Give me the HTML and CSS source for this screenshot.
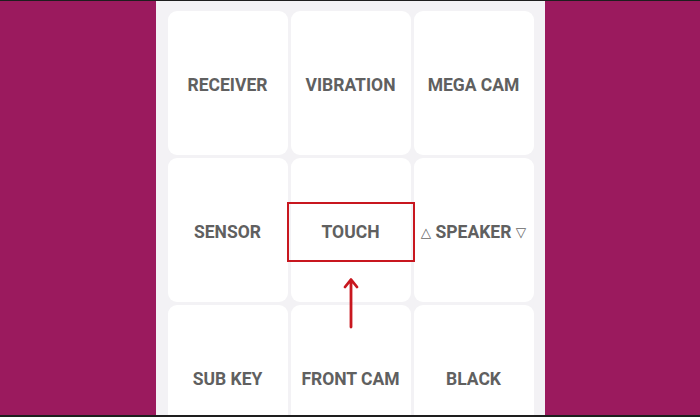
FILE: index.html
```html
<!DOCTYPE html>
<html>
<head>
<meta charset="utf-8">
<link rel="stylesheet" href="styles.css">
</head>
<body>
<div class="frame">
  <div class="panel">
    <div class="grid">
      <div class="cell">RECEIVER</div>
      <div class="cell">VIBRATION</div>
      <div class="cell">MEGA CAM</div>
      <div class="cell">SENSOR</div>
      <div class="cell cell-marked">TOUCH
        <span class="mark"></span>
        <svg class="arrow" width="20" height="54" viewBox="0 0 20 54">
          <path d="M10 50 L10 3 M4 10 L10 2.5 L16 10" fill="none" stroke="#c8171f" stroke-width="2.8" stroke-linecap="round" stroke-linejoin="round"/>
        </svg>
      </div>
      <div class="cell"><span class="tri">△</span>&nbsp;SPEAKER&nbsp;<span class="tri">▽</span></div>
      <div class="cell">SUB KEY</div>
      <div class="cell">FRONT CAM</div>
      <div class="cell">BLACK</div>
    </div>
  </div>
</div>
</body>
</html>
```
FILE: styles.css
```css
html, body {
  margin: 0;
  padding: 0;
}
body {
  width: 700px;
  height: 417px;
  overflow: hidden;
  background: #9b1a5e;
}
.frame {
  box-sizing: border-box;
  width: 700px;
  height: 417px;
  border-top: 1px solid #1e1e1e;
  border-bottom: 2px solid #1e1e1e;
  display: flex;
  justify-content: center;
  overflow: hidden;
}
.panel {
  width: 389px;
  height: 100%;
  flex: none;
  background: #f3f2f5;
  box-sizing: border-box;
  padding: 10px 11px 0 12px;
  overflow: hidden;
}
.grid {
  display: grid;
  grid-template-columns: repeat(3, 1fr);
  grid-auto-rows: 144px;
  gap: 3px;
}
.cell {
  position: relative;
  background: #ffffff;
  border-radius: 9px;
  display: flex;
  align-items: center;
  justify-content: center;
  font-family: Roboto, "Liberation Sans", sans-serif;
  font-weight: 700;
  font-size: 17.5px;
  color: #606060;
  padding-top: 3px;
  box-sizing: border-box;
  white-space: nowrap;
}
.tri {
  font-weight: 400;
  font-size: 13.5px;
  font-family: "DejaVu Sans", sans-serif;
  color: #666666;
}
.cell-marked {
  overflow: visible;
  z-index: 2;
}
.mark {
  position: absolute;
  left: -4px;
  right: -4px;
  top: 44px;
  height: 60px;
  box-sizing: border-box;
  border: 2.8px solid #c8171f;
}
.arrow {
  position: absolute;
  left: 50px;
  top: 119px;
}
```
